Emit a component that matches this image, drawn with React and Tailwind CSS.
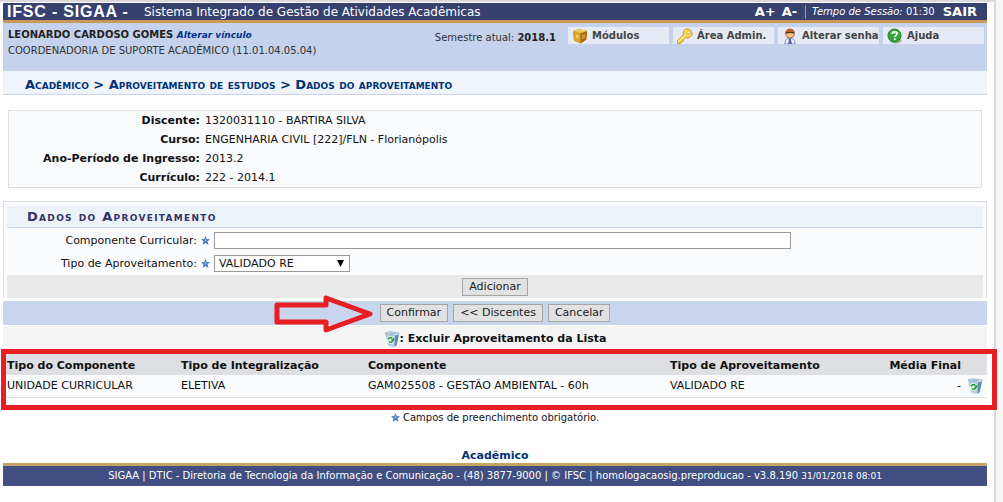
const modules = [
  { label: "Módulos", icon: BoxIcon },
  { label: "Área Admin.", icon: KeyIcon },
  { label: "Alterar senha", icon: UserIcon },
  { label: "Ajuda", icon: HelpIcon },
];

const studentInfo = [
  { label: "Discente:", value: "1320031110 - BARTIRA SILVA" },
  { label: "Curso:", value: "ENGENHARIA CIVIL [222]/FLN - Florianópolis" },
  { label: "Ano-Período de Ingresso:", value: "2013.2" },
  { label: "Currículo:", value: "222 - 2014.1" },
];

const rows = [
  {
    type: "UNIDADE CURRICULAR",
    integration: "ELETIVA",
    component: "GAM025508 - GESTÃO AMBIENTAL - 60h",
    credit: "VALIDADO RE",
    grade: "-",
  },
];

function BoxIcon() {
  return (
    <svg viewBox="0 0 16 16" className="size-4">
      <path d="m1 3 6-2 8 2-.6 8.500L8.500 15.500 2 12.500Z" fill="#c98f1c" />
      <path d="m1 3 7.500 2v10.500L2 12.500Z" fill="#dba12a" />
      <path d="m8.500 5 6.500-2-.6 8.500-5.900 4Z" fill="#a56c10" />
      <path d="m1 3 6-2 8 2-6.500 2Z" fill="#efcb63" />
      <path d="M4 6.500 6.500 7v4L4 10Z" fill="#f0cf72" />
      <path d="m10 7 3-1v4l-3 1.500Z" fill="#cf9632" />
    </svg>
  );
}

function KeyIcon() {
  return (
    <svg viewBox="0 0 16 16" className="size-4">
      <path
        d="M8 1.500c3-2 7.500 1 7 4.500-.5 3-3.500 4.500-6 3.500L7 11.500l-1 .5v1.500l-2 .5-.5 1.500H.500v-3L6.500 6.500C6 4.500 6.500 2.500 8 1.500Z"
        fill="#fbd75b"
        stroke="#d89a1e"
      />
      <path d="M1.500 13 8 7" stroke="#fff3b5" />
      <circle cx="11.500" cy="4.500" r="1.500" fill="#fff" stroke="#d89a1e" strokeWidth=".8" />
    </svg>
  );
}

function UserIcon() {
  return (
    <svg viewBox="0 0 16 16" className="size-4">
      <path d="M3 16c0-4 2-6 5-6s5 2 5 6Z" fill="#f4f6ff" stroke="#7183bd" />
      <path d="M6.500 10.500h3L9 12l1 4H6l1-4Z" fill="#4e5fae" />
      <circle cx="8" cy="5.500" r="4.500" fill="#f6c689" stroke="#98531f" strokeWidth=".8" />
      <path d="M3.500 4.500C4-.5 12-.5 12.500 4.500 10 3 6 3 3.500 4.500Z" fill="#c2622a" />
      <path d="M4 5c2.500-1 5.500-1 8 0" fill="none" stroke="#51301f" strokeWidth="1.400" />
    </svg>
  );
}

function HelpIcon() {
  return (
    <svg viewBox="0 0 16 16" className="size-4">
      <ellipse cx="9" cy="12.500" rx="6" ry="3" fill="#a9b3a9" />
      <circle cx="7.500" cy="7.500" r="6.500" fill="#39a539" stroke="#23802a" />
      <path d="M3 6C3.500 1.500 11.500 1.500 12 6Z" fill="#8ad67b" opacity=".7" />
      <path d="M5.500 6c0-3 4.500-3 4.500-.2C10 7.500 7.800 7.200 7.800 9" fill="none" stroke="#fff" strokeWidth="1.600" />
      <circle cx="7.800" cy="11.200" r="1" fill="#fff" />
    </svg>
  );
}

function TrashIcon() {
  return (
    <svg viewBox="0 0 16 16" className="inline-block size-4">
      <path d="m1 2 14 1.500-2.500 11c-2 1.500-6 1.500-8.500 0Z" fill="#b4cde0" />
      <path d="M11 4.500 15 3l-2.500 11.500-2 1Z" fill="#5f88b0" />
      <path d="m1 2 5-1.500 9 1.500v1.500l-4 1Z" fill="#dcebf5" stroke="#86a8c4" strokeWidth=".7" />
      <path d="m3.500 2.200 3-.8 6 1-2 .9Z" fill="#8fb0c9" />
      <circle cx="6.500" cy="9" r="4" fill="#e3f3e6" />
      <path
        d="M4 8.500c.5-2 3-2.500 4.300-1M9 9c0 2-2.500 3-4 1.500M7.500 9h2V7"
        fill="none"
        stroke="#219a43"
        strokeWidth="1.500"
      />
    </svg>
  );
}

function RequiredStar() {
  return (
    <svg viewBox="0 0 10 10" className="inline-block size-[9px] shrink-0">
      <path d="m5 0 1.400 3.300 3.600.2-2.700 2.400.9 3.800L5 7.700 1.800 9.700l.9-3.800L0 3.500l3.600-.2Z" fill="#4478bd" />
      <path d="m5 2 .7 2.200h2L4 7l.2-2.200L2.500 4h1.800Z" fill="#86b1e2" />
    </svg>
  );
}

const Button = ({ children }) => (
  <button
    type="button"
    className="h-[18px] border border-[#a5a5a5] bg-[#e1e1e1] px-1.5 leading-4 text-[#222]"
  >
    {children}
  </button>
);

const Header = () => (
  <header>
    <div className="flex h-5 items-center border-b-3 border-[#c79a57] bg-[#36416f] text-white">
      <h1 className="flex items-center pl-1">
        <span className="w-[137px] font-['Liberation_Sans',sans-serif] text-base leading-4 font-bold tracking-wider">
          IFSC - SIGAA -
        </span>
        <span className="text-xs leading-4">
          Sistema Integrado de Gestão de Atividades Acadêmicas
        </span>
      </h1>
      <div className="ml-auto flex items-center pr-2.5">
        <button type="button" className="mr-1.5 text-[13px] leading-4 font-bold">
          A+
        </button>
        <button type="button" className="mr-2 text-[13px] leading-4 font-bold">
          A-
        </button>
        <span className="border-l border-[#c79a57] pl-1.5 text-[10px] leading-[14px]">
          <em>Tempo de Sessão:</em> 01:30
        </span>
        <a href="#sair" className="ml-2 text-[13px] leading-4 font-bold">
          SAIR
        </a>
      </div>
    </div>

    <div className="flex h-12 items-start bg-[#c4d2eb] pt-1 pl-[5px] text-[#333]">
      <div className="leading-[15px]">
        <p>
          <strong className="text-[10px] text-[#222]">LEONARDO CARDOSO GOMES</strong>{" "}
          <a href="#vinculo" className="text-[9px] font-bold text-[#003390] italic">
            Alterar vínculo
          </a>
        </p>
        <p className="text-[10px]">COORDENADORIA DE SUPORTE ACADÊMICO (11.01.04.05.04)</p>
      </div>
      <p className="mt-[3px] ml-auto pr-3 text-[10px] leading-[15px]">
        Semestre atual: <strong className="text-[#222]">2018.1</strong>
      </p>
      <nav className="flex gap-1 pr-[3px]">
        {modules.map(({ label, icon: Icon }) => (
          <a
            key={label}
            href="#menu"
            className="flex h-[17px] w-[101px] items-center gap-1 bg-[#e4eaf6] pl-1 text-[10px] font-bold whitespace-nowrap text-[#444]"
          >
            <Icon />
            {label}
          </a>
        ))}
      </nav>
    </div>
  </header>
);

const StudentInfo = () => (
  <dl className="mx-[5px] mt-[15px] border border-[#dedfe3] bg-[#f9fafc]">
    {studentInfo.map((item) => (
      <div key={item.label} className="flex leading-[19px]">
        <dt className="w-[191px] text-right font-bold">{item.label}</dt>
        <dd className="pl-[5px]">{item.value}</dd>
      </div>
    ))}
  </dl>
);

const CreditForm = () => (
  <form>
    <div className="mt-[13px] border border-b-0 border-[#dedfe3] bg-[#fafbfd] px-[3px] pt-1">
      <h3 className="h-[22px] border-b border-[#c8d5ec] bg-[#edf1f8] pl-5 text-[13px] leading-[22px] font-bold tracking-widest text-[#333366] [font-variant:small-caps]">
        Dados do Aproveitamento
      </h3>
      <div className="flex h-6 items-center">
        <label htmlFor="componente" className="w-[190px] text-right">
          Componente Curricular:
        </label>
        <span className="flex w-[17px] justify-center">
          <RequiredStar />
        </span>
        <input
          id="componente"
          type="text"
          className="h-[17px] w-[577px] border border-[#999] bg-white px-1"
        />
      </div>
      <div className="flex h-[23px] items-center">
        <label htmlFor="tipo" className="w-[190px] text-right">
          Tipo de Aproveitamento:
        </label>
        <span className="flex w-[17px] justify-center">
          <RequiredStar />
        </span>
        <div className="relative">
          <select
            id="tipo"
            className="h-[17px] w-[136px] appearance-none border border-[#999] bg-white pl-1 leading-[15px]"
          >
            <option>VALIDADO RE</option>
          </select>
          <svg viewBox="0 0 6 6" className="pointer-events-none absolute top-[5px] right-1.5 size-[7px]">
            <path d="M0 0h6L3 6Z" fill="#000" />
          </svg>
        </div>
      </div>
      <div className="flex h-[23px] items-center justify-center bg-[#eaeaea]">
        <Button>Adicionar</Button>
      </div>
    </div>
    <div className="mt-[3px] flex h-6 items-center justify-center gap-[5px] bg-[#c8d5ec]">
      <Button>Confirmar</Button>
      <Button>&lt;&lt; Discentes</Button>
      <Button>Cancelar</Button>
    </div>
  </form>
);

const CreditTable = () => (
  <table className="w-full table-fixed">
    <thead>
      <tr className="h-6 bg-[#dedfe3] text-left">
        <th className="w-[174px] pt-1 pl-1">Tipo do Componente</th>
        <th className="w-[187px] pt-1 pl-1">Tipo de Integralização</th>
        <th className="w-[302px] pt-1 pl-1">Componente</th>
        <th className="pt-1 pl-1">Tipo de Aproveitamento</th>
        <th className="w-24 pt-1 text-right">Média Final</th>
        <th className="w-[26px]" />
      </tr>
    </thead>
    <tbody>
      {rows.map((row) => (
        <tr key={row.component} className="h-[22px] border-b border-[#dedfe3] bg-[#f9fbfd]">
          <td className="pl-1">{row.type}</td>
          <td className="pl-1">{row.integration}</td>
          <td className="pl-1">{row.component}</td>
          <td className="pl-1">{row.credit}</td>
          <td className="text-right">{row.grade}</td>
          <td>
            <button type="button" aria-label="Excluir" className="block pl-1.5">
              <TrashIcon />
            </button>
          </td>
        </tr>
      ))}
    </tbody>
  </table>
);

export default function App() {
  return (
    <div className="min-h-screen bg-[#f7f7f7] pr-[7px] font-['DejaVu_Sans',sans-serif] text-[11px] leading-[15px] text-[#111]">
      <div className="min-h-screen border-t-2 border-r-2 border-[#d9d9dc] bg-white pt-px pr-[7px] pl-[3px]">
        <Header />

        <h2 className="h-6 border-b border-[#c8d5ec] bg-[#eff3fa] pl-[22px] text-[13px] leading-[27px] font-bold text-[#003375] [font-variant:small-caps]">
          Acadêmico &gt; Aproveitamento de estudos &gt; Dados do aproveitamento
        </h2>

        <StudentInfo />
        <CreditForm />

        <p className="mt-px flex h-[25px] items-center justify-center bg-[#f4f4f4] font-bold">
          <TrashIcon />: Excluir Aproveitamento da Lista
        </p>

        {/* highlighted results */}
        <div className="relative">
          <CreditTable />
          <div className="pointer-events-none absolute -top-0.5 -right-2.5 -left-0.5 h-[61px] border-5 border-[#e81e25]" />
        </div>

        <p className="mt-3 text-center text-[10px]">
          <RequiredStar /> Campos de preenchimento obrigatório.
        </p>

        <p className="mt-6 text-center leading-[14px] font-bold">
          <a href="#academico" className="text-[#003375]">
            Acadêmico
          </a>
        </p>

        <footer className="h-[23px] border-t-3 border-[#c4a363] bg-[#404e82] text-center text-[10px] leading-5 text-white">
          SIGAA | DTIC - Diretoria de Tecnologia da Informação e Comunicação - (48) 3877-9000 | © IFSC |
          homologacaosig.preproducao - v3.8.190 <span className="text-[9px]">31/01/2018 08:01</span>
        </footer>
      </div>

      {/* pointer to the confirm button */}
      <svg viewBox="0 0 102 40" className="pointer-events-none absolute top-[294px] left-[273px] h-10 w-[102px]">
        <path d="M4 11h49V4l44 16-44 16v-8H4Z" fill="none" stroke="#e81e25" strokeWidth="5" strokeLinejoin="round" />
      </svg>
    </div>
  );
}
